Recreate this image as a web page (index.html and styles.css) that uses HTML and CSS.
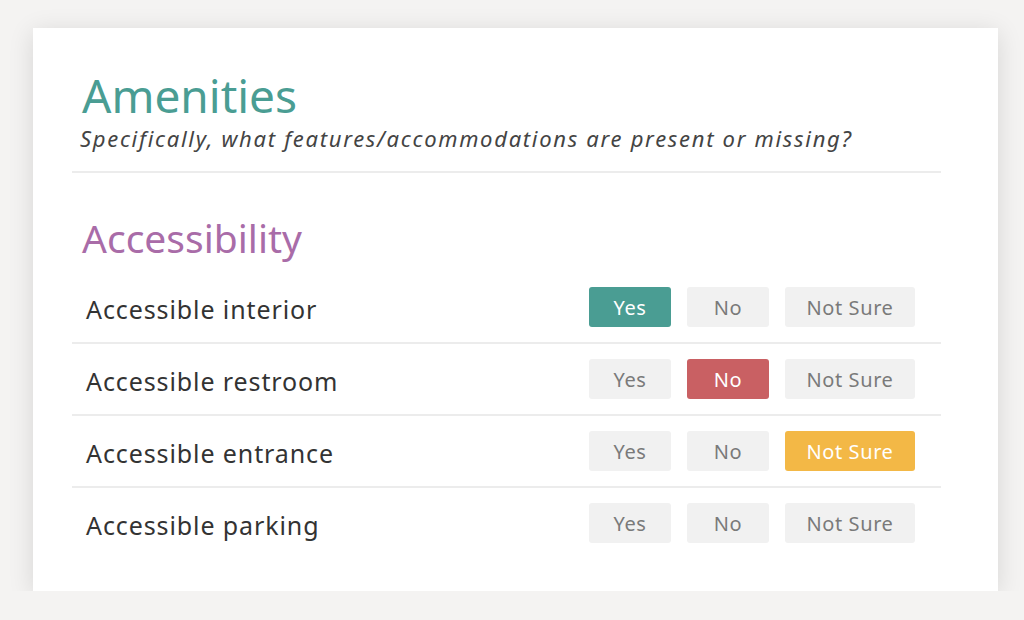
FILE: index.html
```html
<!DOCTYPE html>
<html lang="en">
<head>
    <meta charset="UTF-8">
    <meta name="viewport" content="width=device-width, initial-scale=1.0">
    <title>Amenities</title>
    <link rel="stylesheet" href="styles.css">
</head>
<body>
    <div class="card">
        <div class="card-head">
            <h1 class="title">Amenities</h1>
            <p class="subtitle">Specifically, what features/accommodations are present or missing?</p>
        </div>

        <h2 class="section-title">Accessibility</h2>

        <div class="row">
            <span class="label">Accessible interior</span>
            <div class="choices">
                <button class="btn btn-yes" type="button">Yes</button>
                <button class="btn" type="button">No</button>
                <button class="btn btn-wide" type="button">Not Sure</button>
            </div>
        </div>
        <div class="row">
            <span class="label">Accessible restroom</span>
            <div class="choices">
                <button class="btn" type="button">Yes</button>
                <button class="btn btn-no" type="button">No</button>
                <button class="btn btn-wide" type="button">Not Sure</button>
            </div>
        </div>
        <div class="row">
            <span class="label">Accessible entrance</span>
            <div class="choices">
                <button class="btn" type="button">Yes</button>
                <button class="btn" type="button">No</button>
                <button class="btn btn-wide btn-unsure" type="button">Not Sure</button>
            </div>
        </div>
        <div class="row">
            <span class="label">Accessible parking</span>
            <div class="choices">
                <button class="btn" type="button">Yes</button>
                <button class="btn" type="button">No</button>
                <button class="btn btn-wide" type="button">Not Sure</button>
            </div>
        </div>
    </div>
</body>
</html>
```

FILE: styles.css
```css
body {
    margin: 0;
    background-color: #f4f3f2;
    font-family: 'Noto Sans', 'DejaVu Sans', sans-serif;
    color: #3d3d3d;
}

.card {
    width: 965px;
    height: 563px;
    box-sizing: border-box;
    margin: 28px 0 0 33px;
    padding: 42px 57px 33px 39px;
    background-color: white;
    box-shadow: 0 4px 24px rgba(0, 0, 0, 0.12);
}

.card-head {
    padding: 0 10px 20px;
    border-bottom: 2px solid #ececec;
}

.title {
    margin: 0;
    font-size: 46px;
    line-height: 50px;
    font-weight: 400;
    color: #4a9d93;
}

.subtitle {
    margin: 5px 0 0 -2px;
    font-size: 22px;
    line-height: 26px;
    font-style: italic;
    letter-spacing: 1.7px;
    color: #444;
}

.section-title {
    margin: 42px 0 11px 10px;
    font-size: 39px;
    line-height: 46px;
    font-weight: 400;
    color: #a96ca8;
}

.row {
    display: flex;
    align-items: center;
    justify-content: space-between;
    padding: 15px 26px 15px 14px;
    border-bottom: 2px solid #ececec;
}

.row:last-child {
    border-bottom: none;
}

.label {
    padding-top: 3px;
    font-size: 25px;
    letter-spacing: 0.9px;
    color: #333;
}

.choices {
    display: flex;
    gap: 16px;
}

.btn {
    width: 82px;
    height: 40px;
    padding: 0;
    border: none;
    border-radius: 3px;
    background-color: #f1f1f1;
    color: #7a7a7a;
    font-family: inherit;
    font-size: 20px;
    letter-spacing: 0.6px;
    cursor: pointer;
}

.btn-wide {
    width: 130px;
}

.btn-yes {
    background-color: #4a9d93;
    color: white;
}

.btn-no {
    background-color: #c96063;
    color: white;
}

.btn-unsure {
    background-color: #f3b846;
    color: white;
}
```
